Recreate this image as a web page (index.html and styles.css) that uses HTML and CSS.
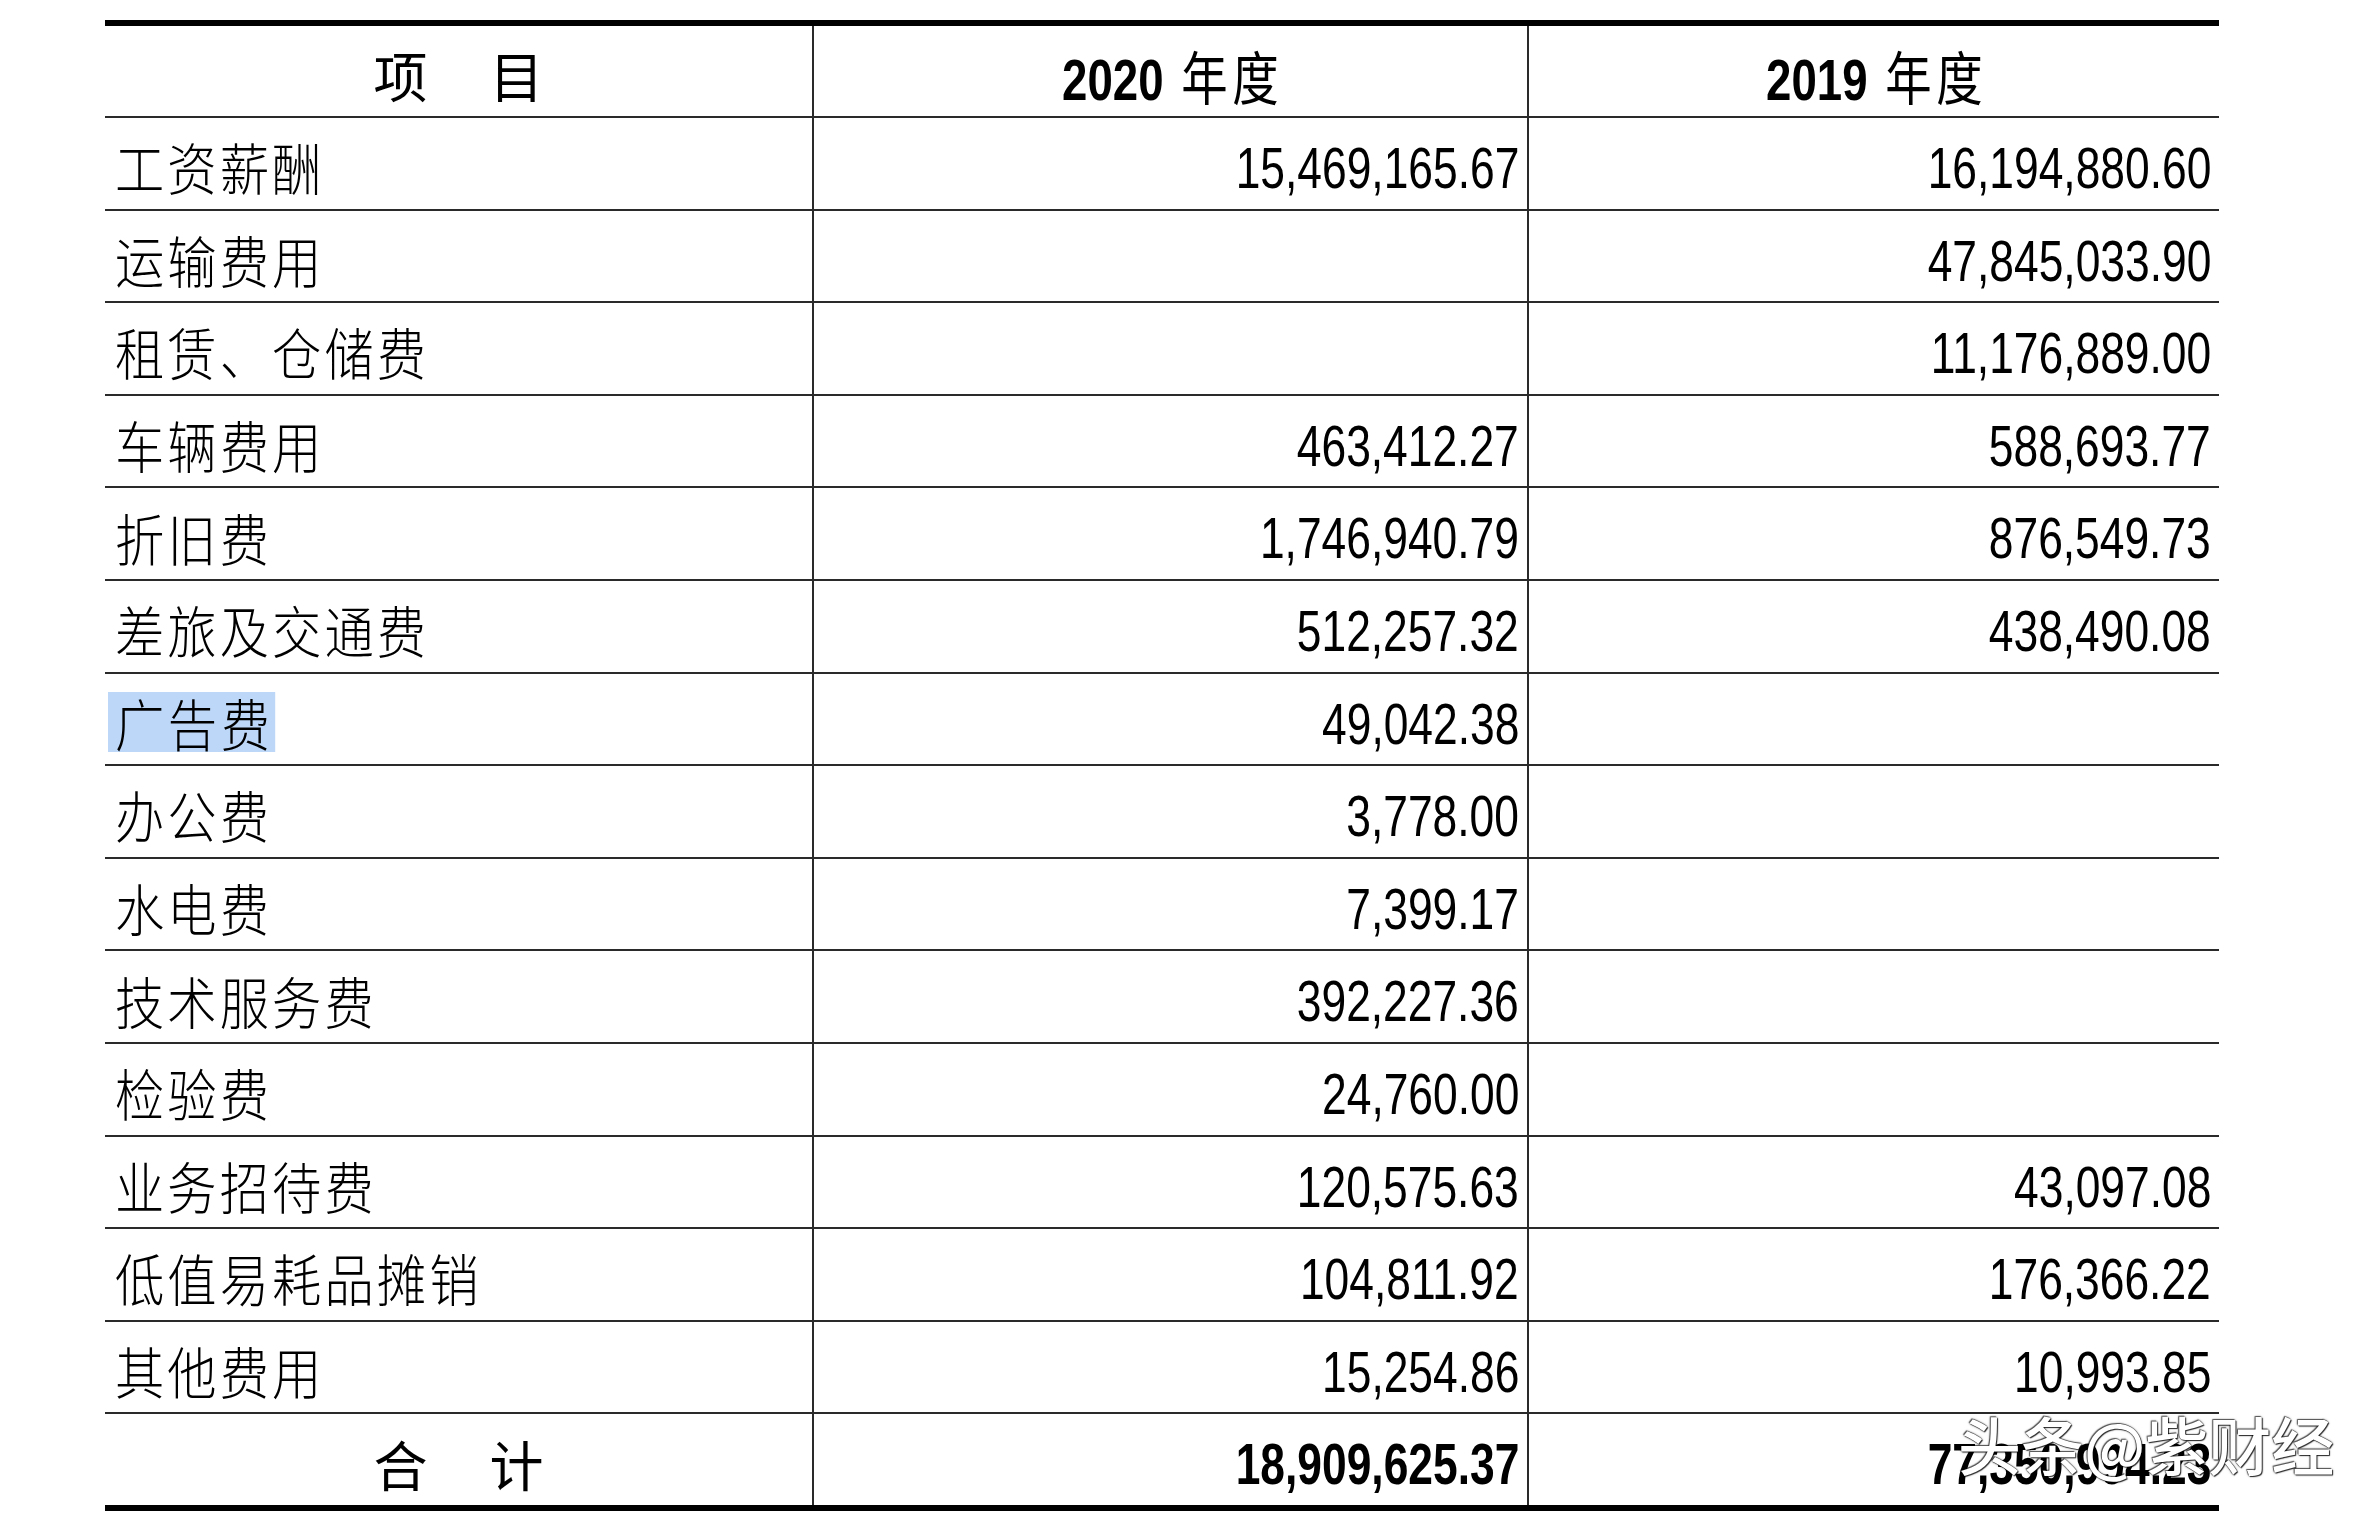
FILE: index.html
```html
<!DOCTYPE html>
<html lang="zh-CN">
<head>
<meta charset="utf-8">
<title>销售费用明细</title>
<link rel="stylesheet" href="styles.css">
</head>
<body>
<div class="sheet">
  <div class="c hd first"><span class="pair"><span>项</span><span>目</span></span></div>
  <div class="c hd mid"><span class="yr"><b>2020</b><span class="yr-cjk">年度</span></span></div>
  <div class="c hd end"><span class="yr"><b>2019</b><span class="yr-cjk">年度</span></span></div>

  <div class="c first"><span class="lbl">工资薪酬</span></div>
  <div class="c mid"><span class="num">15,469,165.67</span></div>
  <div class="c end"><span class="num">16,194,880.60</span></div>

  <div class="c first"><span class="lbl">运输费用</span></div>
  <div class="c mid"></div>
  <div class="c end"><span class="num">47,845,033.90</span></div>

  <div class="c first"><span class="lbl">租赁、仓储费</span></div>
  <div class="c mid"></div>
  <div class="c end"><span class="num">11,176,889.00</span></div>

  <div class="c first"><span class="lbl">车辆费用</span></div>
  <div class="c mid"><span class="num">463,412.27</span></div>
  <div class="c end"><span class="num">588,693.77</span></div>

  <div class="c first"><span class="lbl">折旧费</span></div>
  <div class="c mid"><span class="num">1,746,940.79</span></div>
  <div class="c end"><span class="num">876,549.73</span></div>

  <div class="c first"><span class="lbl">差旅及交通费</span></div>
  <div class="c mid"><span class="num">512,257.32</span></div>
  <div class="c end"><span class="num">438,490.08</span></div>

  <div class="c first"><span class="lbl sel">广告费</span></div>
  <div class="c mid"><span class="num">49,042.38</span></div>
  <div class="c end"></div>

  <div class="c first"><span class="lbl">办公费</span></div>
  <div class="c mid"><span class="num">3,778.00</span></div>
  <div class="c end"></div>

  <div class="c first"><span class="lbl">水电费</span></div>
  <div class="c mid"><span class="num">7,399.17</span></div>
  <div class="c end"></div>

  <div class="c first"><span class="lbl">技术服务费</span></div>
  <div class="c mid"><span class="num">392,227.36</span></div>
  <div class="c end"></div>

  <div class="c first"><span class="lbl">检验费</span></div>
  <div class="c mid"><span class="num">24,760.00</span></div>
  <div class="c end"></div>

  <div class="c first"><span class="lbl">业务招待费</span></div>
  <div class="c mid"><span class="num">120,575.63</span></div>
  <div class="c end"><span class="num">43,097.08</span></div>

  <div class="c first"><span class="lbl">低值易耗品摊销</span></div>
  <div class="c mid"><span class="num">104,811.92</span></div>
  <div class="c end"><span class="num">176,366.22</span></div>

  <div class="c first"><span class="lbl">其他费用</span></div>
  <div class="c mid"><span class="num">15,254.86</span></div>
  <div class="c end"><span class="num">10,993.85</span></div>

  <div class="c hd first last"><span class="pair"><span>合</span><span>计</span></span></div>
  <div class="c mid last"><span class="num bold">18,909,625.37</span></div>
  <div class="c end last"><span class="num bold">77,350,994.23</span></div>
</div>
<div class="wm">头条@紫财经</div>
</body>
</html>
```
FILE: styles.css
```css
* { box-sizing: border-box; }

body {
  margin: 0;
  background: #fff;
  color: #000;
  font-family: "Liberation Sans", "Noto Sans CJK SC", sans-serif;
}

.sheet {
  display: grid;
  grid-template-columns: 707px 715px 692px;
  grid-template-rows: 92px repeat(14, 92.6px) 90.6px;
  width: 2114px;
  margin: 20px 0 0 105px;
  border-top: 6px solid #000;
  border-bottom: 6px solid #000;
}

.c {
  display: flex;
  align-items: center;
  padding-top: 12px;
  border-bottom: 2px solid #2a2a2a;
  overflow: visible;
}

.c.first { padding-left: 10px; }

.c.mid,
.c.end {
  border-left: 2px solid #2a2a2a;
  justify-content: flex-end;
  padding-right: 8px;
}

.c.hd { justify-content: center; padding-left: 0; padding-right: 0; }

.c.last { border-bottom: 0; }

.lbl {
  display: inline-block;
  margin-top: -6px;
  font-family: "Noto Sans CJK SC", sans-serif;
  font-weight: 300;
  font-size: 56px;
  line-height: 1;
  letter-spacing: 3.5px;
  white-space: nowrap;
  transform: scaleX(0.88);
  transform-origin: left center;
}

.lbl.sel {
  background: #bcd7f8;
  margin-left: -7px;
  padding: 2px 2px 2px 8px;
  letter-spacing: 4px;
}

.num {
  display: inline-block;
  font-size: 56.5px;
  line-height: 1;
  white-space: nowrap;
  transform: scaleX(0.785);
  transform-origin: right center;
}

.num.bold { font-weight: 700; }

.pair {
  display: flex;
  gap: 62px;
  margin-top: -4px;
  font-family: "Noto Sans CJK SC", sans-serif;
  font-weight: 400;
  font-size: 54px;
  line-height: 1;
}

.yr {
  display: inline-flex;
  align-items: baseline;
  white-space: nowrap;
  line-height: 1;
  transform: scaleX(0.8);
  transform-origin: center center;
}

.yr b {
  font-size: 57px;
  font-weight: 700;
}

.yr-cjk {
  margin-left: 22px;
  font-family: "Noto Sans CJK SC", sans-serif;
  font-weight: 400;
  font-size: 58px;
  letter-spacing: 6px;
  margin-right: -6px;
}

.wm {
  position: absolute;
  left: 1958px;
  top: 1411px;
  font-family: "Noto Sans CJK SC", sans-serif;
  font-weight: 500;
  font-size: 63px;
  line-height: 1;
  white-space: nowrap;
  color: #fff;
  text-shadow: 0 0 1px rgba(0, 0, 0, 1), 1px 1px 1px rgba(0, 0, 0, 0.8), -1px -1px 1px rgba(0, 0, 0, 0.6), 0 0 3px rgba(0, 0, 0, 0.35);
}
```
